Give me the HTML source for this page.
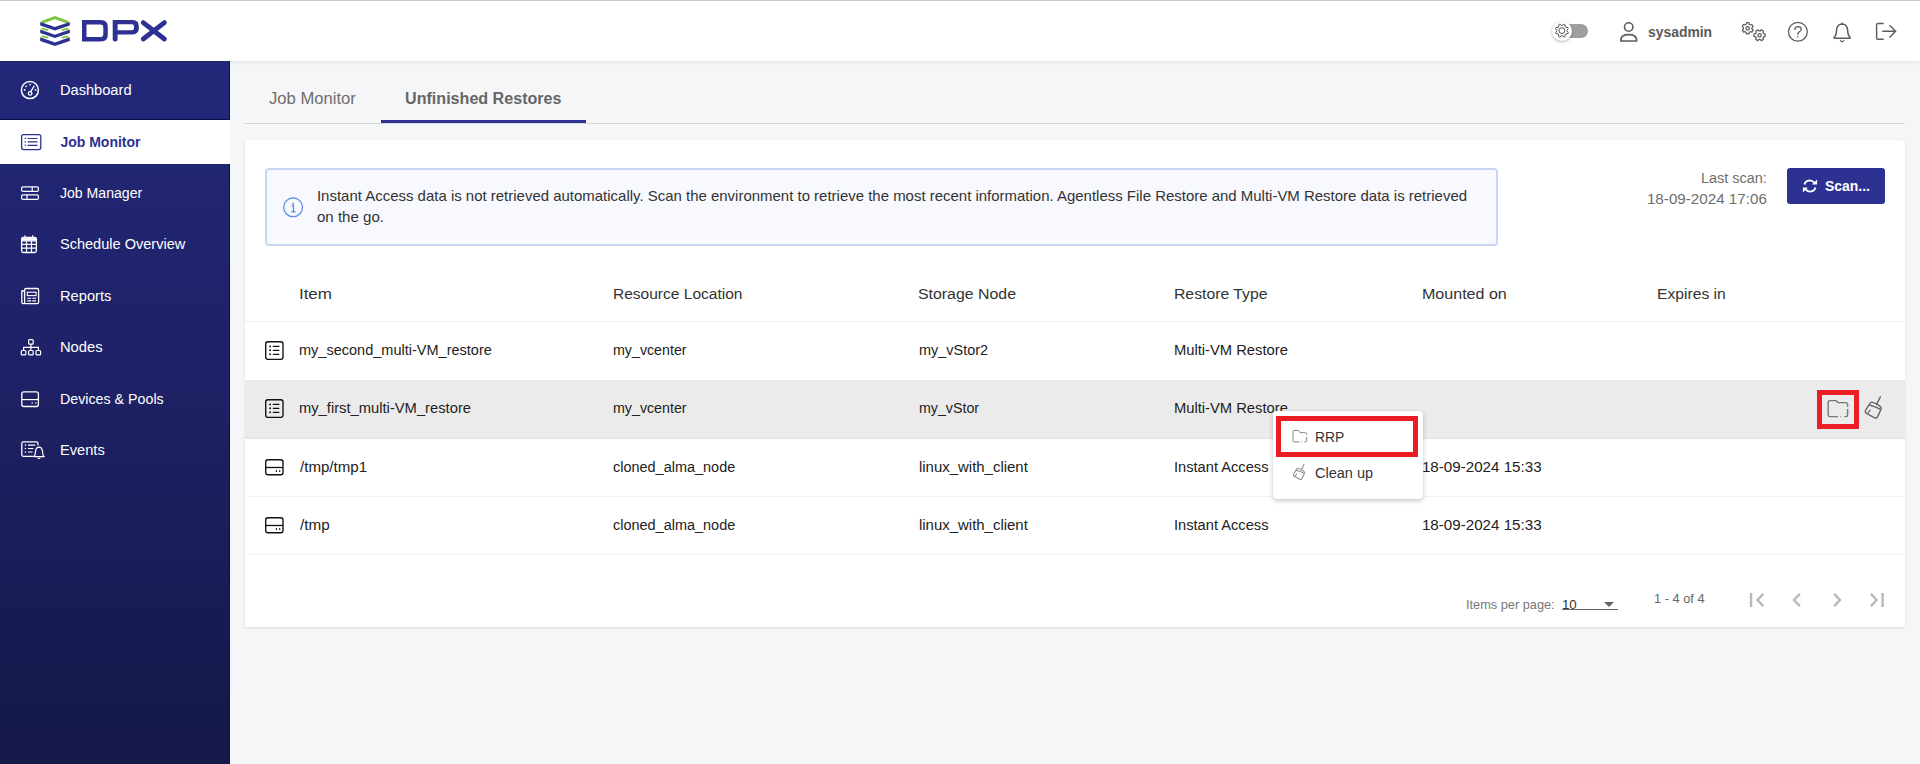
<!DOCTYPE html>
<html><head><meta charset="utf-8">
<style>
*{box-sizing:border-box;margin:0;padding:0}
html,body{width:1920px;height:764px;overflow:hidden;background:#f5f6f8;font-family:"Liberation Sans",sans-serif;color:#333;position:relative}
.abs{position:absolute}
.t{position:absolute;white-space:nowrap;line-height:1}
#topline{position:absolute;left:0;top:0;width:1920px;height:1px;background:#cacaca;z-index:5}
#header{position:absolute;left:0;top:0;width:1920px;height:61px;background:#fff;box-shadow:0 1px 4px rgba(0,0,0,0.10);z-index:3}
#sidebar{position:absolute;left:0;top:61px;width:230px;height:703px;background:linear-gradient(180deg,#23287a 0%,#1e2165 45%,#151848 100%);z-index:2;border-right:1px solid #0b0f62}
#card{position:absolute;left:245px;top:140px;width:1660px;height:487px;background:#fff;border-radius:4px 4px 0 0;box-shadow:0 1px 3px rgba(0,0,0,0.10),0 0 1px rgba(0,0,0,0.06)}
</style></head>
<body>
<div id="header"></div>
<div id="topline"></div>
<svg class="abs" style="left:36px;top:12px;z-index:4" width="40" height="38" viewBox="0 0 40 38">
<path d="M5.8 10.4 L18.9 5.6 L32.2 10.4" fill="none" stroke="#7dc242" stroke-width="2.8"/>
<path d="M4.2 10 L18.9 15 L33.8 10 L33.8 13.4 L18.9 18.6 L4.2 13.4 Z" fill="#2e3192"/>
<path d="M6.3 16.6 L11.6 17.8" stroke="#7dc242" stroke-width="1.8" stroke-linecap="round"/><path d="M26.4 17.8 L31.7 16.6" stroke="#7dc242" stroke-width="1.8" stroke-linecap="round"/>
<path d="M4.2 17.5 L18.9 22.7 L33.8 17.5 L33.8 21 L18.9 26.1 L4.2 21 Z" fill="#2e3192"/>
<path d="M6.3 24.4 L11.6 25.6" stroke="#7dc242" stroke-width="1.8" stroke-linecap="round"/><path d="M26.4 25.6 L31.7 24.4" stroke="#7dc242" stroke-width="1.8" stroke-linecap="round"/>
<path d="M4.2 25.2 L18.9 30.5 L33.8 25.2 L33.8 28.9 L18.9 34.1 L4.2 28.9 Z" fill="#2e3192"/>
</svg>
<svg class="abs" style="left:80px;top:18px;z-index:4" width="90" height="26" viewBox="0 0 90 26">
<path fill="#2e3192" fill-rule="evenodd" d="M2 2 H21 Q27.8 2 27.8 9 V16.5 Q27.8 23.5 21 23.5 H2 Z M6.5 6.4 V19.1 H20.5 Q23.3 19.1 23.3 16 V9.5 Q23.3 6.4 20.5 6.4 Z"/>
<path fill="#2e3192" fill-rule="evenodd" d="M32.7 2 H52.5 Q58.8 2 58.8 8.2 V10.6 Q58.8 16.4 52.5 16.4 H37.6 V21.6 Q37.6 23.5 35.2 23.5 Q32.7 23.5 32.7 21.6 Z M37.6 6.3 V12.2 H52 Q54 12.2 54 10 V8.4 Q54 6.3 52 6.3 Z"/>
<path stroke="#2e3192" stroke-width="4.8" stroke-linecap="round" d="M63.2 4.6 L84.4 21 M84.4 4.6 L63.2 21"/>
</svg>
<div class="abs" style="left:1557px;top:24px;width:31px;height:14px;border-radius:7px;background:#9e9e9e;z-index:4"></div>
<div class="abs" style="left:1552px;top:21px;width:20px;height:20px;border-radius:50%;background:#fff;box-shadow:0 1px 3px rgba(0,0,0,0.3);z-index:4"></div>
<svg class="abs" style="left:1540px;top:14px;z-index:5" width="180" height="36" viewBox="0 0 180 36"><path d="M21.90 11.70 L24.15 10.18 L24.84 10.47 L25.36 13.14 L25.36 13.14 L28.03 13.66 L28.32 14.35 L26.80 16.60 L26.80 16.60 L28.32 18.85 L28.03 19.54 L25.36 20.06 L25.36 20.06 L24.84 22.73 L24.15 23.02 L21.90 21.50 L21.90 21.50 L19.65 23.02 L18.96 22.73 L18.44 20.06 L18.44 20.06 L15.77 19.54 L15.48 18.85 L17.00 16.60 L17.00 16.60 L15.48 14.35 L15.77 13.66 L18.44 13.14 L18.44 13.14 L18.96 10.47 L19.65 10.18 L21.90 11.70 Z" fill="none" stroke="#555" stroke-width="1.0" stroke-linejoin="round"/><circle cx="21.9" cy="16.6" r="2.9" fill="none" stroke="#555" stroke-width="1.0"/><circle cx="88.7" cy="13" r="4.2" fill="none" stroke="#5c5c5c" stroke-width="1.6"/><path d="M80.9 27 H96.6 V25.6 Q96.1 20.6 88.8 20.6 Q81.3 20.6 80.9 25.6 Z" fill="none" stroke="#5c5c5c" stroke-width="1.7" stroke-linejoin="round"/></svg>
<div class="t" style="left:1647.50px;top:25px;font-size:14px;color:#5a5a5a;font-weight:700;transform:scaleX(0.9921);transform-origin:1px 0;z-index:5;">sysadmin</div>
<svg class="abs" style="left:1730px;top:14px;z-index:5" width="180" height="36" viewBox="0 0 180 36"><path d="M16.12 10.30 L16.51 8.72 L18.89 8.72 L19.28 10.30 L20.37 10.93 L21.94 10.49 L23.12 12.54 L21.95 13.67 L21.95 14.93 L23.12 16.06 L21.94 18.11 L20.37 17.67 L19.28 18.30 L18.89 19.88 L16.51 19.88 L16.12 18.30 L15.03 17.67 L13.46 18.11 L12.28 16.06 L13.45 14.93 L13.45 13.67 L12.28 12.54 L13.46 10.49 L15.03 10.93 Z" fill="none" stroke="#5c5c5c" stroke-width="1.25" stroke-linejoin="round"/><circle cx="17.7" cy="14.3" r="1.7" fill="none" stroke="#5c5c5c" stroke-width="1.25"/><path d="M30.23 16.95 L31.36 15.78 L33.41 16.96 L32.97 18.53 L33.60 19.62 L35.18 20.01 L35.18 22.39 L33.60 22.78 L32.97 23.87 L33.41 25.44 L31.36 26.62 L30.23 25.45 L28.97 25.45 L27.84 26.62 L25.79 25.44 L26.23 23.87 L25.60 22.78 L24.02 22.39 L24.02 20.01 L25.60 19.62 L26.23 18.53 L25.79 16.96 L27.84 15.78 L28.97 16.95 Z" fill="none" stroke="#5c5c5c" stroke-width="1.25" stroke-linejoin="round"/><circle cx="29.6" cy="21.2" r="1.7" fill="none" stroke="#5c5c5c" stroke-width="1.25"/><circle cx="67.9" cy="17.8" r="9.4" fill="none" stroke="#5c5c5c" stroke-width="1.3"/><path d="M64.8 15.6 Q64.8 12.6 68 12.6 Q71.2 12.6 71.2 15.2 Q71.2 16.9 69.2 17.8 Q67.8 18.5 67.8 20.4" fill="none" stroke="#5c5c5c" stroke-width="1.3" stroke-linecap="round"/><circle cx="67.7" cy="22.8" r="0.8" fill="#5c5c5c"/><path d="M104.3 23.3 Q105.9 21.8 106.3 19.2 L106.6 15.8 Q107.2 10 112.1 9.9 Q117 10 117.6 15.8 L117.9 19.2 Q118.3 21.8 119.9 23.3 Q120.9 24.3 119.5 24.3 H104.7 Q103.3 24.3 104.3 23.3 Z" fill="none" stroke="#5c5c5c" stroke-width="1.5" stroke-linejoin="round"/><path d="M112.1 8.6 V9.9" stroke="#5c5c5c" stroke-width="1.3"/><path d="M110.1 26.4 Q112.1 28.9 114.1 26.4" fill="none" stroke="#5c5c5c" stroke-width="1.3"/><path d="M153.7 9.5 H147.9 Q146.6 9.5 146.6 10.8 V23.9 Q146.6 25.2 147.9 25.2 H153.7" fill="none" stroke="#5c5c5c" stroke-width="1.4"/><path d="M152.3 17.3 H165.5 M159.5 11.3 L165.6 17.3 L159.5 23.4" fill="none" stroke="#5c5c5c" stroke-width="1.4" stroke-linejoin="miter"/></svg>
<div id="sidebar"></div>
<div class="abs" style="left:0;top:119px;width:230px;height:1px;background:#0d0f4a;z-index:3"></div>
<div class="abs" style="left:0;top:120px;width:230px;height:44px;background:#fff;z-index:3"></div>
<svg class="abs" style="left:0;top:0;z-index:4" width="230" height="470" viewBox="0 0 230 470"><circle cx="29.9" cy="90.1" r="8.5" fill="none" stroke="#fff" stroke-width="1.5"/><circle cx="24.7" cy="89.9" r="0.9" fill="#fff"/><circle cx="26.1" cy="86.3" r="0.9" fill="#fff"/><circle cx="30.1" cy="84.6" r="0.9" fill="#fff"/><circle cx="35.6" cy="89.9" r="0.9" fill="#fff"/><circle cx="30.1" cy="93.4" r="1.8" fill="none" stroke="#fff" stroke-width="1.3"/><path d="M30.8 91.7 L34.1 86.1" stroke="#fff" stroke-width="1.3" stroke-linecap="round"/><rect x="21.6" y="134.6" width="19.2" height="15" rx="2" fill="none" stroke="#2d3192" stroke-width="1.3"/><circle cx="25.2" cy="138.5" r="0.75" fill="#2d3192"/><circle cx="25.2" cy="141.9" r="0.75" fill="#2d3192"/><circle cx="25.2" cy="145.3" r="0.75" fill="#2d3192"/><path d="M27.6 138.5 H37.5 M27.6 141.9 H37.5 M27.6 145.3 H37.5" stroke="#2d3192" stroke-width="1.2"/><rect x="21.6" y="186.8" width="16.8" height="4.6" rx="1.5" fill="none" stroke="#fff" stroke-width="1.3"/><rect x="21.6" y="194.8" width="16.8" height="4.6" rx="1.5" fill="none" stroke="#fff" stroke-width="1.3"/><path d="M32.2 186.8 V191.4 M27 194.8 V199.4" stroke="#fff" stroke-width="1.2"/><rect x="21.6" y="237.5" width="14.8" height="15" rx="1.8" fill="none" stroke="#fff" stroke-width="1.3"/><path d="M21.6 240.8 H36.4 M21.6 244.4 H36.4 M21.6 248.2 H36.4 M26.5 240.8 V252.5 M31.5 240.8 V252.5" stroke="#fff" stroke-width="1.2"/><path d="M21.6 239.3 H36.4" stroke="#fff" stroke-width="2.4"/><path d="M24.9 235.2 V237.8 M32.7 235.2 V237.8" stroke="#fff" stroke-width="1.2"/><rect x="24.6" y="288.5" width="14" height="15.2" rx="1.5" fill="none" stroke="#fff" stroke-width="1.3"/><path d="M24.6 291 H21.8 V302 Q21.8 303.7 23.3 303.7 H25" fill="none" stroke="#fff" stroke-width="1.3"/><rect x="27.3" y="292.2" width="8.8" height="3.4" fill="none" stroke="#fff" stroke-width="1.1"/><path d="M27.3 298.3 H31.2 M32.3 298.3 H36.1 M27.3 300.9 H31.2 M32.3 300.9 H36.1" stroke="#fff" stroke-width="1.1"/><rect x="28.6" y="339.6" width="4.6" height="4.6" rx="1" fill="none" stroke="#fff" stroke-width="1.2"/><path d="M30.9 344.2 V350.3 M23.6 350.3 V347.4 H38.4 V350.3" fill="none" stroke="#fff" stroke-width="1.2"/><rect x="21.3" y="350.5" width="4.6" height="4.4" rx="1" fill="none" stroke="#fff" stroke-width="1.2"/><rect x="28.6" y="350.5" width="4.6" height="4.4" rx="1" fill="none" stroke="#fff" stroke-width="1.2"/><rect x="36" y="350.5" width="4.6" height="4.4" rx="1" fill="none" stroke="#fff" stroke-width="1.2"/><rect x="21.8" y="391.9" width="16.6" height="14.6" rx="2" fill="none" stroke="#fff" stroke-width="1.3"/><path d="M21.8 399.6 H38.4" stroke="#fff" stroke-width="1.2"/><circle cx="32.2" cy="403" r="0.8" fill="#fff"/><circle cx="35.8" cy="403" r="0.8" fill="#fff"/><path d="M33.5 456.3 H23.3 Q21.8 456.3 21.8 454.8 V443.4 Q21.8 441.9 23.3 441.9 H36.5 Q38 441.9 38 443.4 V445.5" fill="none" stroke="#fff" stroke-width="1.3"/><circle cx="25.4" cy="445.1" r="0.8" fill="#fff"/><circle cx="25.4" cy="448.5" r="0.8" fill="#fff"/><circle cx="25.4" cy="452" r="0.8" fill="#fff"/><path d="M28 445.1 H35.4 M28 448.5 H33.5 M28 452 H32.5" stroke="#fff" stroke-width="1.2"/><path d="M33.8 456.7 Q35 455.8 35.2 454 L35.5 451.5 Q35.9 447.3 39 447.2 Q42.1 447.3 42.5 451.5 L42.8 454 Q43 455.8 44.3 456.7 Z" fill="none" stroke="#fff" stroke-width="1.2" stroke-linejoin="round"/><path d="M37.8 457.8 Q39 459.2 40.2 457.8" fill="none" stroke="#fff" stroke-width="1.1"/></svg>
<div class="t" style="left:60.20px;top:83px;font-size:14px;color:#fff;font-weight:400;transform:scaleX(1.0448);transform-origin:1px 0;z-index:4;">Dashboard</div>
<div class="t" style="left:60.40px;top:135px;font-size:14px;color:#2d3192;font-weight:700;z-index:4;">Job Monitor</div>
<div class="t" style="left:60.20px;top:186px;font-size:14px;color:#fff;font-weight:400;transform:scaleX(1.0055);transform-origin:0px 0;z-index:4;">Job Manager</div>
<div class="t" style="left:59.80px;top:237px;font-size:14px;color:#fff;font-weight:400;transform:scaleX(1.0392);transform-origin:1px 0;z-index:4;">Schedule Overview</div>
<div class="t" style="left:60.10px;top:289px;font-size:14px;color:#fff;font-weight:400;transform:scaleX(1.0500);transform-origin:1px 0;z-index:4;">Reports</div>
<div class="t" style="left:60.10px;top:340px;font-size:14px;color:#fff;font-weight:400;transform:scaleX(1.0513);transform-origin:1px 0;z-index:4;">Nodes</div>
<div class="t" style="left:60.10px;top:392px;font-size:14px;color:#fff;font-weight:400;transform:scaleX(1.0178);transform-origin:1px 0;z-index:4;">Devices &amp; Pools</div>
<div class="t" style="left:60.10px;top:443px;font-size:14px;color:#fff;font-weight:400;transform:scaleX(1.0463);transform-origin:1px 0;z-index:4;">Events</div>
<div class="abs" style="left:245px;top:123px;width:1660px;height:1px;background:#d6d6d6"></div>
<div class="abs" style="left:381px;top:120px;width:205px;height:3px;background:#2d3192"></div>
<div class="t" style="left:269.20px;top:91px;font-size:16.8px;color:#6e6e6e;font-weight:400;transform:scaleX(0.9898);transform-origin:0px 0;">Job Monitor</div>
<div class="t" style="left:404.50px;top:91px;font-size:16.8px;color:#666;font-weight:700;transform:scaleX(0.9586);transform-origin:1px 0;">Unfinished Restores</div>
<div id="card"></div>
<div class="abs" style="left:265px;top:168px;width:1233px;height:78px;background:#f7f9fe;border:2px solid #c6d6f3;border-radius:4px"></div>
<svg class="abs" style="left:278px;top:192px" width="32" height="32" viewBox="0 0 32 32"><circle cx="15.1" cy="15.3" r="9.4" fill="none" stroke="#5b8be5" stroke-width="1.3"/><circle cx="15.1" cy="11.7" r="1" fill="#5b8be5"/><path d="M13.6 13.9 H15.4 V19.7 M13.2 19.8 H17.6" fill="none" stroke="#5b8be5" stroke-width="1.3"/></svg>
<div class="t" style="left:316.80px;top:189px;font-size:14.4px;color:#333;font-weight:400;transform:scaleX(1.0399);transform-origin:1px 0;">Instant Access data is not retrieved automatically. Scan the environment to retrieve the most recent information. Agentless File Restore and Multi-VM Restore data is retrieved</div>
<div class="t" style="left:316.60px;top:210px;font-size:14.4px;color:#333;font-weight:400;transform:scaleX(1.0468);transform-origin:1px 0;">on the go.</div>
<div class="t" style="left:1701.00px;top:171px;font-size:14px;color:#6e6e6e;font-weight:400;transform:scaleX(1.0323);transform-origin:1px 0;">Last scan:</div>
<div class="t" style="left:1646.70px;top:192px;font-size:14px;color:#6e6e6e;font-weight:400;transform:scaleX(1.0853);transform-origin:1px 0;">18-09-2024 17:06</div>
<div class="abs" style="left:1787px;top:168px;width:98px;height:36px;background:#2d3192;border-radius:3px"></div>
<svg class="abs" style="left:1800px;top:176px" width="20" height="20" viewBox="0 0 20 20"><path d="M4.5 8.4 Q5.5 4.6 9.6 4.4 Q12.4 4.4 14.2 6.6" fill="none" stroke="#fff" stroke-width="1.9"/><path d="M12 8.4 H17.1 V3.4 Z" fill="#fff"/><path d="M15.4 11.6 Q14.4 15.4 10.3 15.6 Q7.5 15.6 5.7 13.4" fill="none" stroke="#fff" stroke-width="1.9"/><path d="M7.9 11.6 H2.9 V16.6 Z" fill="#fff"/></svg>
<div class="t" style="left:1824.50px;top:179px;font-size:14px;color:#fff;font-weight:700;transform:scaleX(0.9942);transform-origin:1px 0;">Scan...</div>
<div class="t" style="left:299.00px;top:286px;font-size:15.4px;color:#333;font-weight:400;transform:scaleX(1.1071);transform-origin:1px 0;">Item</div>
<div class="t" style="left:612.60px;top:286px;font-size:15.4px;color:#333;font-weight:400;transform:scaleX(1.0087);transform-origin:1px 0;">Resource Location</div>
<div class="t" style="left:918.25px;top:286px;font-size:15.4px;color:#333;font-weight:400;transform:scaleX(1.0319);transform-origin:1px 0;">Storage Node</div>
<div class="t" style="left:1174.00px;top:286px;font-size:15.4px;color:#333;font-weight:400;transform:scaleX(1.0244);transform-origin:1px 0;">Restore Type</div>
<div class="t" style="left:1422.40px;top:286px;font-size:15.4px;color:#333;font-weight:400;transform:scaleX(1.0437);transform-origin:1px 0;">Mounted on</div>
<div class="t" style="left:1657.40px;top:286px;font-size:15.4px;color:#333;font-weight:400;transform:scaleX(1.0182);transform-origin:1px 0;">Expires in</div>
<div class="abs" style="left:245px;top:321px;width:1660px;height:1px;background:#eeeeee"></div>
<div class="abs" style="left:245px;top:380px;width:1660px;height:58px;background:#ebebeb"></div>
<div class="abs" style="left:245px;top:438px;width:1660px;height:1px;background:#e3e3e3"></div>
<div class="abs" style="left:245px;top:496px;width:1660px;height:1px;background:#f4f4f4"></div>
<div class="abs" style="left:245px;top:554px;width:1660px;height:1px;background:#f4f4f4"></div>
<svg class="abs" style="left:258px;top:334px" width="32" height="32" viewBox="0 0 32 32"><rect x="7.7" y="7.7" width="17.3" height="17.6" rx="2.2" fill="none" stroke="#111" stroke-width="1.35"/><circle cx="12.1" cy="12.4" r="0.95" fill="#111"/><circle cx="12.1" cy="16.3" r="0.95" fill="#111"/><circle cx="12.1" cy="20.3" r="0.95" fill="#111"/><path d="M15.3 12.4 H20.9 M15.3 16.3 H20.9 M15.3 20.3 H20.9" stroke="#111" stroke-width="1.25" stroke-linecap="round"/></svg>
<svg class="abs" style="left:258px;top:392px" width="32" height="32" viewBox="0 0 32 32"><rect x="7.7" y="7.7" width="17.3" height="17.6" rx="2.2" fill="none" stroke="#111" stroke-width="1.35"/><circle cx="12.1" cy="12.4" r="0.95" fill="#111"/><circle cx="12.1" cy="16.3" r="0.95" fill="#111"/><circle cx="12.1" cy="20.3" r="0.95" fill="#111"/><path d="M15.3 12.4 H20.9 M15.3 16.3 H20.9 M15.3 20.3 H20.9" stroke="#111" stroke-width="1.25" stroke-linecap="round"/></svg>
<svg class="abs" style="left:258px;top:452px" width="32" height="32" viewBox="0 0 32 32"><rect x="7.7" y="7.7" width="17.3" height="15" rx="2.2" fill="none" stroke="#111" stroke-width="1.35"/><path d="M7.7 15.5 H25" stroke="#111" stroke-width="1.3"/><path d="M18.4 18.6 V19.4 M21.7 18.6 V19.4" stroke="#111" stroke-width="1.2" stroke-linecap="round"/></svg>
<svg class="abs" style="left:258px;top:510px" width="32" height="32" viewBox="0 0 32 32"><rect x="7.7" y="7.7" width="17.3" height="15" rx="2.2" fill="none" stroke="#111" stroke-width="1.35"/><path d="M7.7 15.5 H25" stroke="#111" stroke-width="1.3"/><path d="M18.4 18.6 V19.4 M21.7 18.6 V19.4" stroke="#111" stroke-width="1.2" stroke-linecap="round"/></svg>
<div class="t" style="left:299.30px;top:343px;font-size:14px;color:#222;font-weight:400;transform:scaleX(1.0373);transform-origin:1px 0;">my_second_multi-VM_restore</div>
<div class="t" style="left:612.80px;top:343px;font-size:14px;color:#222;font-weight:400;transform:scaleX(1.0169);transform-origin:1px 0;">my_vcenter</div>
<div class="t" style="left:918.60px;top:343px;font-size:14px;color:#222;font-weight:400;transform:scaleX(1.0323);transform-origin:1px 0;">my_vStor2</div>
<div class="t" style="left:1174.30px;top:343px;font-size:14px;color:#222;font-weight:400;transform:scaleX(1.0533);transform-origin:1px 0;">Multi-VM Restore</div>
<div class="t" style="left:299.30px;top:401px;font-size:14px;color:#222;font-weight:400;transform:scaleX(1.0531);transform-origin:1px 0;">my_first_multi-VM_restore</div>
<div class="t" style="left:612.80px;top:401px;font-size:14px;color:#222;font-weight:400;transform:scaleX(1.0169);transform-origin:1px 0;">my_vcenter</div>
<div class="t" style="left:918.60px;top:401px;font-size:14px;color:#222;font-weight:400;transform:scaleX(1.0155);transform-origin:1px 0;">my_vStor</div>
<div class="t" style="left:1174.30px;top:401px;font-size:14px;color:#222;font-weight:400;transform:scaleX(1.0533);transform-origin:1px 0;">Multi-VM Restore</div>
<div class="t" style="left:300.20px;top:460px;font-size:14px;color:#222;font-weight:400;transform:scaleX(1.0774);transform-origin:0px 0;">/tmp/tmp1</div>
<div class="t" style="left:612.80px;top:460px;font-size:14px;color:#222;font-weight:400;transform:scaleX(1.0333);transform-origin:1px 0;">cloned_alma_node</div>
<div class="t" style="left:918.50px;top:460px;font-size:14px;color:#222;font-weight:400;transform:scaleX(1.0683);transform-origin:1px 0;">linux_with_client</div>
<div class="t" style="left:1174.30px;top:460px;font-size:14px;color:#222;font-weight:400;transform:scaleX(1.0472);transform-origin:1px 0;">Instant Access</div>
<div class="t" style="left:1422.30px;top:460px;font-size:14px;color:#222;font-weight:400;transform:scaleX(1.0826);transform-origin:1px 0;">18-09-2024 15:33</div>
<div class="t" style="left:300.20px;top:518px;font-size:14px;color:#222;font-weight:400;transform:scaleX(1.0889);transform-origin:0px 0;">/tmp</div>
<div class="t" style="left:612.80px;top:518px;font-size:14px;color:#222;font-weight:400;transform:scaleX(1.0333);transform-origin:1px 0;">cloned_alma_node</div>
<div class="t" style="left:918.50px;top:518px;font-size:14px;color:#222;font-weight:400;transform:scaleX(1.0683);transform-origin:1px 0;">linux_with_client</div>
<div class="t" style="left:1174.30px;top:518px;font-size:14px;color:#222;font-weight:400;transform:scaleX(1.0472);transform-origin:1px 0;">Instant Access</div>
<div class="t" style="left:1422.30px;top:518px;font-size:14px;color:#222;font-weight:400;transform:scaleX(1.0826);transform-origin:1px 0;">18-09-2024 15:33</div>
<div class="abs" style="left:1817px;top:390px;width:42px;height:39px;border:5px solid #ec1c24"></div>
<svg class="abs" style="left:1820px;top:392px" width="70" height="32" viewBox="0 0 70 32"><path d="M27.6 14.8 V12.4 Q27.6 10.6 25.8 10.6 H18 L15.9 8.6 H9.8 Q8.2 8.6 8.2 10.2 V22.8 Q8.2 24.6 9.8 24.6 H18" fill="none" stroke="#777" stroke-width="1.4" stroke-linejoin="round"/><path d="M20.5 24.6 H21.3 M24.3 24.6 H26 Q27.6 24.6 27.6 23 V17" fill="none" stroke="#777" stroke-width="1.4"/><path d="M60.4 4.8 L56.6 12.4" stroke="#666" stroke-width="1.4" stroke-linecap="round"/><path d="M52.2 10.2 Q56.8 11.6 60.4 14.6 Q61.6 15.8 61 17.4 L57.6 24.6 Q56.6 26.6 54.6 25.8 L46.6 21.4 Q44.6 20.2 45.6 18.2 L49.6 11.8 Q50.6 10 52.2 10.2 Z" fill="none" stroke="#666" stroke-width="1.4" stroke-linejoin="round"/><path d="M49.2 13 Q55.4 14.6 60.6 17.4" fill="none" stroke="#666" stroke-width="1.3"/><path d="M48 20.8 L50.2 18.2" stroke="#666" stroke-width="1.2" stroke-linecap="round"/></svg>
<div class="abs" style="left:1273px;top:411px;width:150px;height:88px;background:#fff;border-radius:4px;box-shadow:0 2px 5px rgba(0,0,0,0.22),0 0 1px rgba(0,0,0,0.1)"></div>
<div class="abs" style="left:1276px;top:416px;width:142px;height:41px;border:5px solid #ec1c24"></div>
<svg class="abs" style="left:1288px;top:425px" width="24" height="60" viewBox="0 0 24 60"><path d="M18.6 10 V8.6 Q18.6 7.6 17.6 7.6 H12 L10.6 5.4 H6 Q5 5.4 5 6.4 V15.8 Q5 16.9 6 16.9 H11.5" fill="none" stroke="#8a8a8a" stroke-width="1"/><path d="M13.5 16.9 H14.3 M16.3 16.9 H17.6 Q18.6 16.9 18.6 15.9 V12" fill="none" stroke="#8a8a8a" stroke-width="1"/><g transform="translate(4.9 39.6) scale(0.7) translate(-44.6 -4.8)" fill="none" stroke="#8a8a8a" stroke-width="1.45" stroke-linejoin="round" stroke-linecap="round"><path d="M60.4 4.8 L56.6 12.4"/><path d="M52.2 10.2 Q56.8 11.6 60.4 14.6 Q61.6 15.8 61 17.4 L57.6 24.6 Q56.6 26.6 54.6 25.8 L46.6 21.4 Q44.6 20.2 45.6 18.2 L49.6 11.8 Q50.6 10 52.2 10.2 Z"/><path d="M49.2 13 Q55.4 14.6 60.6 17.4"/><path d="M48 20.8 L50.2 18.2"/></g></svg>
<div class="t" style="left:1314.60px;top:430px;font-size:14px;color:#333;font-weight:400;transform:scaleX(0.9893);transform-origin:1px 0;">RRP</div>
<div class="t" style="left:1314.60px;top:466px;font-size:14px;color:#333;font-weight:400;transform:scaleX(1.0382);transform-origin:1px 0;">Clean up</div>
<div class="t" style="left:1466.10px;top:599px;font-size:12.2px;color:#777;font-weight:400;transform:scaleX(1.0470);transform-origin:1px 0;">Items per page:</div>
<div class="t" style="left:1561.90px;top:599px;font-size:12.2px;color:#333;font-weight:400;transform:scaleX(1.0917);transform-origin:1px 0;">10</div>
<div class="abs" style="left:1562px;top:609px;width:56px;height:1px;background:#666"></div>
<svg class="abs" style="left:1600px;top:598px" width="20" height="12" viewBox="0 0 20 12"><path d="M4 4 H14 L9 9 Z" fill="#666"/></svg>
<div class="t" style="left:1654.00px;top:593px;font-size:12.4px;color:#666;font-weight:400;transform:scaleX(1.0354);transform-origin:1px 0;">1 - 4 of 4</div>
<svg class="abs" style="left:1740px;top:585px" width="160" height="30" viewBox="0 0 160 30"><path d="M11.05 8.1 V21.9 M23.3 8.9 L17.4 15 L23.3 21.1" fill="none" stroke="#b9b9b9" stroke-width="2.4"/><path d="M59.9 8.9 L54 15 L59.9 21.1" fill="none" stroke="#b9b9b9" stroke-width="2.4"/><path d="M94.1 8.9 L100 15 L94.1 21.1" fill="none" stroke="#b9b9b9" stroke-width="2.4"/><path d="M130.8 8.9 L136.7 15 L130.8 21.1 M142.6 8.1 V21.9" fill="none" stroke="#b9b9b9" stroke-width="2.4"/></svg>
</body></html>
